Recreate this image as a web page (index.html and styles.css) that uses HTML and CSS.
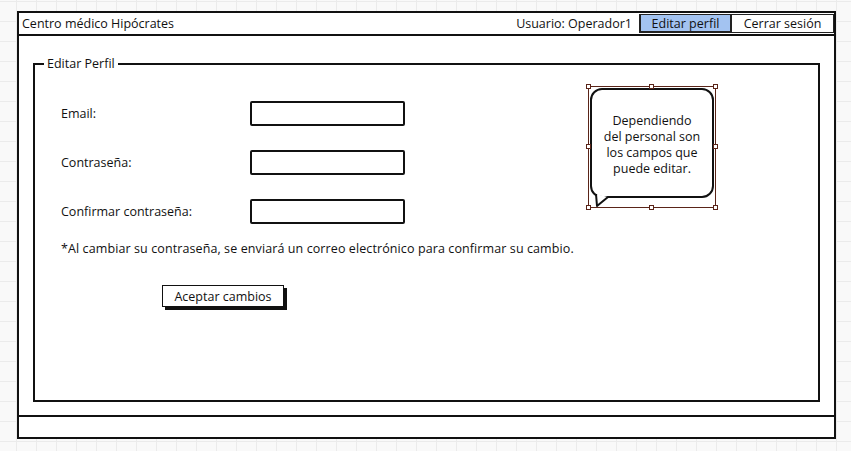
FILE: index.html
```html
<!DOCTYPE html>
<html lang="es">
<head>
  <meta charset="UTF-8" />
  <title>Centro médico Hipócrates - Editar perfil</title>
  <link rel="stylesheet" href="styles.css">
</head>
<body>
  <div class="ventana">
    <div class="barra">
      <span class="titulo">Centro médico Hipócrates</span>
      <span class="usuario">Usuario: Operador1</span>
      <a class="boton-barra activo">Editar perfil</a>
      <a class="boton-barra">Cerrar sesión</a>
    </div>

    <div class="contenido">
      <fieldset class="perfil">
        <legend>Editar Perfil</legend>

        <div class="columnas">
          <form class="formulario">
            <div class="campo">
              <label for="email">Email:</label>
              <input type="text" id="email" />
            </div>
            <div class="campo">
              <label for="clave">Contraseña:</label>
              <input type="password" id="clave" />
            </div>
            <div class="campo">
              <label for="clave2">Confirmar contraseña:</label>
              <input type="password" id="clave2" />
            </div>

            <p class="aviso">*Al cambiar su contraseña, se enviará un correo electrónico para confirmar su cambio.</p>

            <button type="submit">Aceptar cambios</button>
          </form>

          <div class="seleccion">
            <div class="globo">
              Dependiendo<br>del personal son<br>los campos que<br>puede editar.
              <svg class="cola" width="16" height="14" viewBox="0 0 16 14">
                <path d="M1 0 L2 12 L13 3" fill="#fff" stroke="#111" stroke-width="2" stroke-linejoin="round" />
              </svg>
            </div>
            <span class="punto p1"></span><span class="punto p2"></span><span class="punto p3"></span>
            <span class="punto p4"></span><span class="punto p5"></span>
            <span class="punto p6"></span><span class="punto p7"></span><span class="punto p8"></span>
          </div>
        </div>
      </fieldset>
    </div>
  </div>
  <div class="pie"></div>
</body>
</html>
```

FILE: styles.css
```css
body {
  margin: 0;
  padding: 11px 0 0 17px;
  font-family: "Open Sans", "Noto Sans", sans-serif;
  font-size: 12.5px;
  color: #111;
  background-color: #f9f9f9;
  background-image:
    linear-gradient(#ebebeb 1px, transparent 1px),
    linear-gradient(90deg, #ebebeb 1px, transparent 1px);
  background-size: 20px 20px;
  background-position: 16px 1px;
  height: 451px;
  box-sizing: border-box;
  overflow: hidden;
}

.ventana {
  width: 819px;
  height: 406px;
  box-sizing: border-box;
  background: #fff;
  border: 2px solid #111;
}

.barra {
  display: flex;
  align-items: center;
  height: 21px;
  border-bottom: 2px solid #111;
}

.titulo {
  padding-left: 3px;
  flex: 1;
}

.usuario {
  margin-right: 7px;
}

.boton-barra {
  height: 19px;
  line-height: 18px;
  box-sizing: border-box;
  padding: 0;
  border: 1px solid #222;
  background: #fff;
  margin-top: -1px;
}

.boton-barra.activo {
  width: 93px;
  text-align: center;
  background: #a3c3f1;
  border-width: 1px 2px 2px 2px;
}

.boton-barra + .boton-barra {
  width: 102px;
  text-align: center;
  border-left: none;
}

.contenido {
  padding: 19px 14px 0 14px;
}

.perfil {
  margin: 0;
  padding: 0;
  height: 347px;
  box-sizing: border-box;
  border: 2px solid #111;
}

.perfil legend {
  margin-left: 9px;
  padding: 0 3px;
}

.columnas {
  display: flex;
  padding-left: 26px;
}

.formulario {
  flex: 1;
  padding-top: 29px;
}

.campo {
  display: flex;
  align-items: center;
  height: 25px;
  margin-bottom: 24px;
}

.campo label {
  width: 189px;
}

.campo input {
  width: 155px;
  height: 25px;
  box-sizing: border-box;
  border: 2px solid #111;
  border-radius: 2px;
  padding: 0 4px;
}

.aviso {
  margin: -8px 0 0 0;
  letter-spacing: 0.1px;
}

button {
  margin: 28px 0 0 101px;
  height: 22px;
  width: 122px;
  padding: 0;
  font: inherit;
  color: #111;
  background: #fff;
  border: 1.5px solid #111;
  box-shadow: 3px 3px 0 #111;
}

.seleccion {
  position: relative;
  width: 128px;
  height: 122px;
  box-sizing: border-box;
  margin: 14px 102px 0 0;
  border: 1px solid #5a2418;
  padding: 1px;
}

.globo {
  position: relative;
  height: 110px;
  box-sizing: border-box;
  border: 2px solid #111;
  border-radius: 12px;
  background: #fff;
  padding-top: 23px;
  text-align: center;
  line-height: 16px;
}

.cola {
  position: absolute;
  left: 3px;
  bottom: -12px;
}

.punto {
  position: absolute;
  width: 5px;
  height: 5px;
  box-sizing: border-box;
  background: #fff;
  border: 1px solid #5a2418;
}

.p1 { left: -3px; top: -3px; }
.p2 { left: 60px; top: -3px; }
.p3 { right: -3px; top: -3px; }
.p4 { left: -3px; top: 57px; }
.p5 { right: -3px; top: 57px; }
.p6 { left: -3px; bottom: -3px; }
.p7 { left: 60px; bottom: -3px; }
.p8 { right: -3px; bottom: -3px; }

.pie {
  width: 819px;
  height: 24px;
  box-sizing: border-box;
  margin-top: -2px;
  background: #fff;
  border: 2px solid #111;
}
```
